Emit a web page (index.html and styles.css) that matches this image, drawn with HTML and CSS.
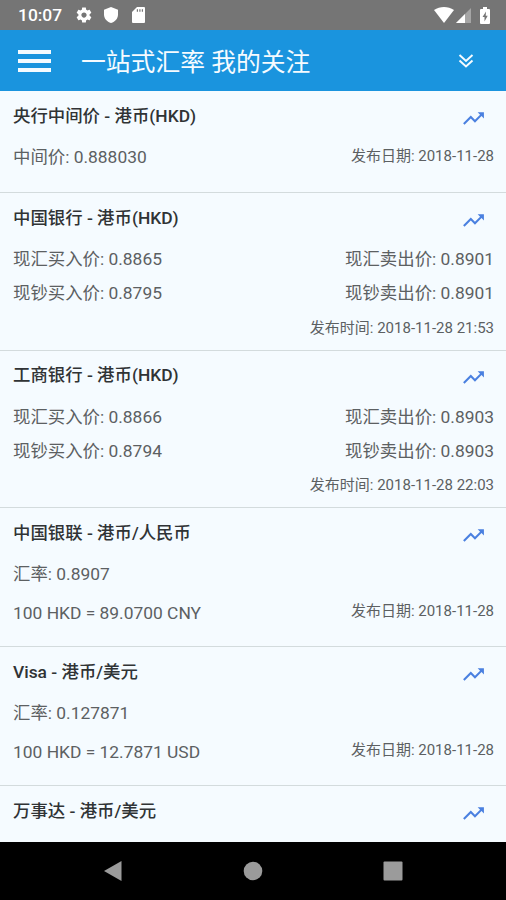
FILE: index.html
```html
<!DOCTYPE html>
<html lang="zh-CN">
<head>
    <meta charset="UTF-8">
    <meta name="viewport" content="width=device-width, initial-scale=1.0">
    <title>一站式汇率</title>
    <link rel="stylesheet" href="styles.css">
</head>
<body>
    <!-- shared icon -->
    <svg class="symbols" width="0" height="0">
        <symbol id="trend" viewBox="0 0 24 24">
            <path d="M16 6l2.29 2.29-4.88 4.88-4-4L2 16.59 3.41 18l6-6 4 4 6.3-6.29L22 12V6z"/>
        </symbol>
    </svg>

    <div class="status-bar">
        <span class="clock">10:07</span>
        <svg class="status-icon gear" viewBox="0 0 24 24"><path d="M19.43 12.98c.04-.32.07-.64.07-.98s-.03-.66-.07-.98l2.11-1.65c.19-.15.24-.42.12-.64l-2-3.46c-.12-.22-.39-.3-.61-.22l-2.49 1c-.52-.4-1.08-.73-1.69-.98l-.38-2.65C14.46 2.18 14.25 2 14 2h-4c-.25 0-.46.18-.49.42l-.38 2.65c-.61.25-1.17.59-1.69.98l-2.49-1c-.23-.09-.49 0-.61.22l-2 3.46c-.13.22-.07.49.12.64l2.11 1.65c-.04.32-.07.65-.07.98s.03.66.07.98l-2.11 1.65c-.19.15-.24.42-.12.64l2 3.46c.12.22.39.3.61.22l2.49-1c.52.4 1.08.73 1.69.98l.38 2.65c.03.24.24.42.49.42h4c.25 0 .46-.18.49-.42l.38-2.65c.61-.25 1.17-.59 1.69-.98l2.49 1c.23.09.49 0 .61-.22l2-3.46c.12-.22.07-.49-.12-.64l-2.11-1.65zM12 15.5c-1.93 0-3.5-1.57-3.5-3.5s1.57-3.5 3.5-3.5 3.5 1.57 3.5 3.5-1.57 3.5-3.5 3.5z"/></svg>
        <svg class="status-icon shield" viewBox="0 0 14 16"><path d="M7 0L14 2.7V7.5C14 11.5 11.2 14.8 7 16C2.8 14.8 0 11.5 0 7.5V2.7z"/></svg>
        <svg class="status-icon sdcard" viewBox="0 0 13 16"><path d="M5 0H12Q13 0 13 1V15Q13 16 12 16H1Q0 16 0 15V5z"/><path class="notch" d="M4.8 2.2h1.2v2.6H4.8zM7.3 2.2h1.2v2.6H7.3zM9.8 2.2H11v2.6H9.8z"/></svg>
        <div class="status-right">
            <svg class="status-icon wifi" viewBox="0 0 20 16"><path d="M0 3C6-1 14-1 20 3L10 16z"/></svg>
            <svg class="status-icon signal" viewBox="0 0 15 15"><path class="faded" d="M15 0V15H0z"/><path d="M9 6V15H0z"/></svg>
            <svg class="status-icon battery" viewBox="0 0 10 17"><path d="M3 0H7V2H9Q10 2 10 3V16Q10 17 9 17H1Q0 17 0 16V3Q0 2 1 2H3z"/><path class="notch" d="M6 4.5L2.5 10H4.5V14.5L7.7 8.7H5.7z"/></svg>
        </div>
    </div>

    <div class="header">
        <div class="menu">
            <span></span>
            <span></span>
            <span></span>
        </div>
        <h1>一站式汇率 我的关注</h1>
        <svg class="chevrons" viewBox="0 0 16 14"><path d="M1.5 1L8 7L14.5 1M1.5 6.5L8 12.5L14.5 6.5"/></svg>
    </div>

    <div class="list">
        <div class="card single">
            <div class="card-title"><h2>央行中间价 - 港币(HKD)</h2><svg class="trend"><use href="#trend"/></svg></div>
            <div class="row"><span>中间价: 0.888030</span><span class="date">发布日期: 2018-11-28</span></div>
        </div>

        <div class="card bank">
            <div class="card-title"><h2>中国银行 - 港币(HKD)</h2><svg class="trend"><use href="#trend"/></svg></div>
            <div class="row"><span>现汇买入价: 0.8865</span><span>现汇卖出价: 0.8901</span></div>
            <div class="row"><span>现钞买入价: 0.8795</span><span>现钞卖出价: 0.8901</span></div>
            <div class="row time"><span class="date">发布时间: 2018-11-28 21:53</span></div>
        </div>

        <div class="card bank">
            <div class="card-title"><h2>工商银行 - 港币(HKD)</h2><svg class="trend"><use href="#trend"/></svg></div>
            <div class="row"><span>现汇买入价: 0.8866</span><span>现汇卖出价: 0.8903</span></div>
            <div class="row"><span>现钞买入价: 0.8794</span><span>现钞卖出价: 0.8903</span></div>
            <div class="row time"><span class="date">发布时间: 2018-11-28 22:03</span></div>
        </div>

        <div class="card network">
            <div class="card-title"><h2>中国银联 - 港币/人民币</h2><svg class="trend"><use href="#trend"/></svg></div>
            <div class="row"><span>汇率: 0.8907</span></div>
            <div class="row example"><span>100 HKD = 89.0700 CNY</span><span class="date">发布日期: 2018-11-28</span></div>
        </div>

        <div class="card network">
            <div class="card-title"><h2>Visa - 港币/美元</h2><svg class="trend"><use href="#trend"/></svg></div>
            <div class="row"><span>汇率: 0.127871</span></div>
            <div class="row example"><span>100 HKD = 12.7871 USD</span><span class="date">发布日期: 2018-11-28</span></div>
        </div>

        <div class="card last">
            <div class="card-title"><h2>万事达 - 港币/美元</h2><svg class="trend"><use href="#trend"/></svg></div>
        </div>
    </div>

    <div class="nav-bar">
        <svg viewBox="0 0 20 22"><path d="M18.5 1V21L1 11z"/></svg>
        <svg viewBox="0 0 20 22"><circle cx="10" cy="11" r="9.3"/></svg>
        <svg viewBox="0 0 20 22"><rect x="0.5" y="1.5" width="19" height="19" rx="1"/></svg>
    </div>
</body>
</html>
```
FILE: styles.css
```css
* {
    box-sizing: border-box;
}
body {
    font-family: Roboto, 'Noto Sans CJK SC', sans-serif;
    margin: 0;
    height: 900px;
    display: flex;
    flex-direction: column;
    background: #f5fbff;
    color: #5c6062;
    overflow: hidden;
}
.symbols {
    position: absolute;
}
.status-bar {
    height: 30px;
    flex: none;
    display: flex;
    align-items: center;
    padding: 0 16px 0 18px;
    background: #757575;
    color: white;
}
.clock {
    width: 57px;
    font-size: 17.4px;
    font-weight: 500;
}
.status-icon {
    fill: white;
}
.notch {
    fill: #757575;
}
.faded {
    opacity: 0.35;
}
.gear {
    width: 18px;
    height: 18px;
    margin-right: 11px;
}
.shield {
    width: 14px;
    height: 16px;
    margin-right: 14px;
}
.sdcard {
    width: 13px;
    height: 16px;
}
.status-right {
    margin-left: auto;
    display: flex;
    align-items: center;
}
.wifi {
    width: 20px;
    height: 16px;
    margin-right: 2px;
}
.signal {
    width: 15px;
    height: 15px;
    margin-right: 9px;
}
.battery {
    width: 10px;
    height: 17px;
}
.header {
    height: 61px;
    flex: none;
    display: flex;
    align-items: center;
    padding: 0 32px 0 18px;
    background: #1a94de;
}
.menu {
    width: 33px;
    display: flex;
    flex-direction: column;
    gap: 5px;
    margin-right: 30px;
}
.menu span {
    height: 4px;
    background: #f5fbff;
}
.header h1 {
    flex: 1;
    margin: 0;
    padding-top: 4px;
    font-size: 24.8px;
    line-height: 36px;
    font-weight: 400;
    color: #f5fbff;
    white-space: nowrap;
}
.chevrons {
    width: 16px;
    height: 14px;
    fill: none;
    stroke: #f5fbff;
    stroke-width: 2;
}
.list {
    flex: none;
    height: 751px;
    overflow: hidden;
}
.card {
    padding: 0 12px 0 13px;
    border-bottom: 1.5px solid #d3dbdd;
}
.single {
    height: 102px;
}
.bank {
    height: 157.5px;
}
.network {
    height: 139px;
}
.last {
    height: 56px;
    border-bottom: 0;
}
.card-title {
    height: 49px;
    display: flex;
    align-items: center;
    justify-content: space-between;
}
.card h2 {
    margin: 0;
    font-size: 17.4px;
    line-height: 26px;
    font-weight: 500;
    color: #303335;
}
.trend {
    width: 25px;
    height: 25px;
    margin: 5px 8.5px 0 0;
    fill: #4a80e0;
}
.row {
    height: 34px;
    display: flex;
    align-items: center;
    justify-content: space-between;
    font-size: 17.4px;
    line-height: 26px;
}
.date {
    font-size: 15px;
    line-height: 22px;
}
.row .date {
    margin-bottom: 2px;
}
.time {
    justify-content: flex-end;
}
.time .date {
    margin-bottom: -1px;
}
.example {
    height: 43px;
}
.example .date {
    margin-bottom: 4px;
}
.nav-bar {
    flex: 1;
    display: flex;
    align-items: center;
    justify-content: center;
    gap: 120px;
    background: black;
}
.nav-bar svg {
    width: 20px;
    height: 22px;
    fill: #9b9b9b;
}
```
